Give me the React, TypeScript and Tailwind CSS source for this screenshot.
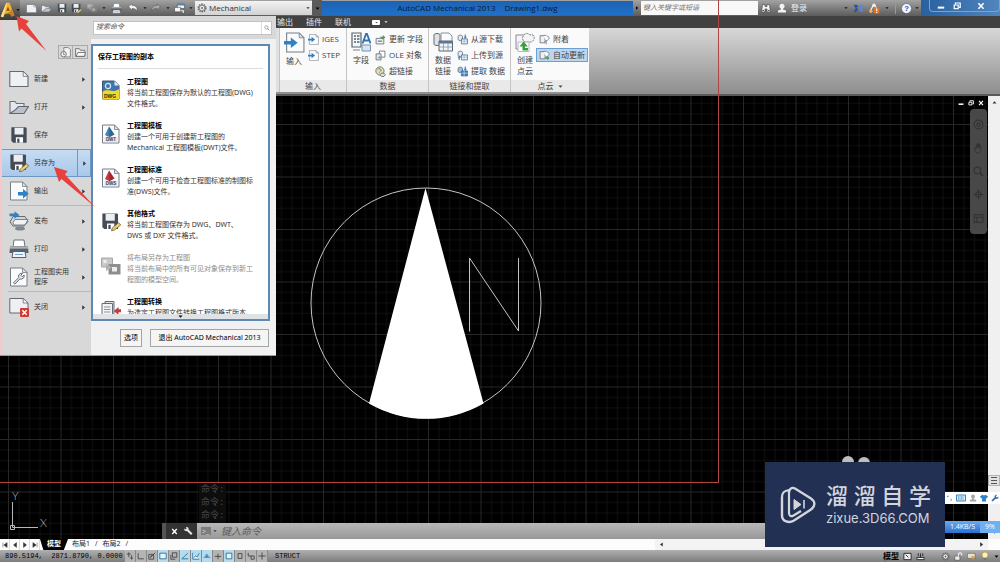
import React from "react";
import type { ReactNode } from "react";

type IconProps = { className?: string };

function Svg({ className = "size-5", children }: { className?: string; children: ReactNode }) {
  return (
    <svg viewBox="0 0 20 20" className={`shrink-0 ${className}`} fill="none" aria-hidden="true">
      {children}
    </svg>
  );
}

/* ---------- document icons ---------- */

const PageIcon = ({ className }: IconProps) => (
  <Svg className={className}>
    <path d="M.8 2.5h13.4l4.8 4.8v10.2H.8z" fill="#eef0f3" stroke="#646a72" strokeWidth="1.1" />
    <path d="M14.2 2.5v4.8H19z" fill="#fff" stroke="#646a72" strokeWidth=".8" />
  </Svg>
);

const FolderIcon = ({ className }: IconProps) => (
  <Svg className={className}>
    <path d="M1 16.5v-12h5l1.5 2H15v3" fill="#e4e8ec" stroke="#6b7178" strokeWidth="1.1" />
    <path d="M1 16.5l5.500-3.800 3-3.200h10l-4.500 7z" fill="#b9c2cc" stroke="#5f666e" strokeWidth="1.1" />
  </Svg>
);

const FloppyShape = () => (
  <>
    <path d="M1.500 1.500h16l1 1v16h-15l-2-2z" fill="#454c56" />
    <path d="M5 2h10v7.500H5z" fill="#eceff2" />
    <path d="M6.500 12.500h8v6h-8z" fill="#fff" />
    <path d="M8 14h2.500v4.500H8z" fill="#454c56" />
  </>
);

const FloppyIcon = ({ className }: IconProps) => (
  <Svg className={className}>
    <FloppyShape />
  </Svg>
);

const FloppyPencilIcon = ({ className }: IconProps) => (
  <Svg className={className}>
    <g transform="scale(.92)">
      <FloppyShape />
    </g>
    <path d="M10.500 18.800l.8-2.900 6.200-5.200 2.200 2.300-6.300 5z" fill="#ecd07a" stroke="#6f5a26" strokeWidth=".8" />
  </Svg>
);

const Sheet = ({ fill = "#fafbfc" }: { fill?: string }) => (
  <>
    <path d="M1.500 1h12l4.500 4.500V19H1.500z" fill={fill} stroke="#767d85" strokeWidth="1" />
    <path d="M13.500 1v4.500H18z" fill="#dfe3e8" stroke="#767d85" strokeWidth=".8" />
  </>
);

const ExportIcon = ({ className }: IconProps) => (
  <Svg className={className}>
    <Sheet />
    <path d="M9 11h5V8l5.800 4.700-5.800 4.800v-3H9z" fill="#2f82c6" />
  </Svg>
);

const ImportIcon = ({ className }: IconProps) => (
  <Svg className={className}>
    <g transform="translate(1 0)">
      <Sheet />
    </g>
    <path d="M0 8.500h6.500V5.200l6.500 5-6.500 5V12H0z" fill="#2f82c6" />
  </Svg>
);

const PublishIcon = ({ className }: IconProps) => (
  <Svg className={className}>
    <path d="M4 5.500h12l3 5-4 4.500H4l-3-4z" fill="#cfd5db" stroke="#646b73" />
    <path d="M4 11.500l2-3h13l-3 5.500H5z" fill="#f0f3f5" stroke="#646b73" strokeWidth=".8" />
    <ellipse cx="11" cy="17.500" rx="5" ry="2" fill="#7f8790" />
    <path d="M.5 2.500h5V.3l5 3.700-5 3.700v-2.400h-5z" fill="#2f82c6" />
  </Svg>
);

const PrinterIcon = ({ className }: IconProps) => (
  <Svg className={className}>
    <path d="M5 1h10l1 7H4z" fill="#fff" stroke="#6b7178" />
    <path d="M1 7.500h18l.5 6.500H.5z" fill="#59616b" />
    <path d="M1 7.500h18v2.200H1z" fill="#aab1b9" />
    <path d="M4 12.500h12l1 6H3z" fill="#f1f5f9" stroke="#59616b" />
    <path d="M6 15.500h8" stroke="#6ea0cf" />
  </Svg>
);

const WrenchPageIcon = ({ className }: IconProps) => (
  <Svg className={className}>
    <Sheet />
    <path
      d="M4.500 15.800l5.200-5.200a3.200 3.200 0 0 1 3.800-4.200l-1.700 1.900 1.400 1.400 1.900-1.700a3.200 3.200 0 0 1-4.200 3.900l-5 5.200z"
      fill="#e7eaee"
      stroke="#555c65"
      strokeWidth=".9"
    />
  </Svg>
);

const ClosePageIcon = ({ className }: IconProps) => (
  <Svg className={className}>
    <path d="M.8 1.500h13.400L19 6v10H.8z" fill="#eef0f3" stroke="#646a72" />
    <path d="M14.200 1.500V6H19z" fill="#fff" stroke="#646a72" strokeWidth=".8" />
    <rect x="11" y="11" width="9" height="9" rx="1" fill="#cf3b30" />
    <path d="M13.300 13.300l4.400 4.400m0-4.400l-4.400 4.400" stroke="#fff" strokeWidth="1.500" />
  </Svg>
);

const TagSheet = ({ label, tip, className }: IconProps & { label: string; tip: string }) => (
  <Svg className={className}>
    <Sheet />
    <path d="M8 2.500l-4 8.500 4.500 2.200 5-2.600z" fill={tip} />
    <path d="M8 2.500l.5 10.700 5-2.600z" fill="#000" fillOpacity=".22" />
    <rect x="3.500" y="13.200" width="13" height="5" fill="#e3e6ea" />
    <text x="10" y="17.400" textAnchor="middle" fontSize="4.500" fontWeight="700" fill="#3b3f45" fontFamily="Liberation Sans, sans-serif">
      {label}
    </text>
  </Svg>
);

const DwgIcon = ({ className }: IconProps) => (
  <Svg className={className}>
    <path d="M1.500 1h12l4.500 4.500V19H1.500z" fill="#3e76ab" stroke="#3a5673" />
    <path d="M13.500 1v4.500H18z" fill="#dfe9f3" />
    <circle cx="7" cy="6" r="2.600" fill="none" stroke="#d4e6f5" strokeWidth="1.200" />
    <path d="M1.500 12c5-4.500 10 2 16.500-3v10H1.500z" fill="#f2d72d" />
    <text x="9" y="17.800" textAnchor="middle" fontSize="5" fontWeight="700" fill="#332c00" fontFamily="Liberation Sans, sans-serif">
      DWG
    </text>
  </Svg>
);

const LayoutSaveIcon = ({ className }: IconProps) => (
  <Svg className={className}>
    <path d="M.5 2h11v9H.5z" fill="#c9c9c9" stroke="#a6a6a6" />
    <path d="M2.500 4h3v3h-3z" fill="#efefef" />
    <path d="M7.500 8h12v10.500h-12z" fill="#8e8e8e" />
    <path d="M11 11h5v4.500h-5z" fill="#ededed" />
    <path d="M5 8v7l6-3.500z" fill="#b3b3b3" />
  </Svg>
);

const ConvertIcon = ({ className }: IconProps) => (
  <Svg className={className}>
    <path d="M4 1.500h9v15H4z" fill="#dde0e4" stroke="#666d75" />
    <path d="M1 3.500h10.500v14H1z" fill="#f3f4f6" stroke="#666d75" />
    <path d="M3 7h6.500M3 9.500h6.500M3 12h6.500" stroke="#8d949c" />
    <path d="M20 9.300h-2.500V7L12.800 11l4.700 4v-2.700H20z" fill="#c83a3d" />
  </Svg>
);

/* ---------- ribbon icons ---------- */

const FieldIcon = ({ className }: IconProps) => (
  <Svg className={className}>
    <path d="M1 1h9v14H1z" fill="#f5f8fb" stroke="#59636e" strokeWidth="1.200" />
    <path d="M3 4h2m1 0h2.500M3 7h2m1 0h2.500M3 10h2m1 0h2.500" stroke="#59636e" strokeWidth="1.400" />
    <path d="M11 13h8.500v6H11z" fill="#d4e4f4" stroke="#7893ad" />
    <path d="M11.500 11.500L15 2h1l3.500 9.500M13 8.500h5" stroke="#2f73b4" strokeWidth="1.800" />
    <path d="M2 18h7" stroke="#b6bec7" strokeWidth="2" />
  </Svg>
);

const UpdateFieldIcon = ({ className }: IconProps) => (
  <Svg className={className}>
    <path d="M2 8h14v10H2z" fill="#f0f2f4" stroke="#656c74" strokeWidth="1.500" />
    <path d="M5 13h8" stroke="#656c74" strokeWidth="2" />
    <path d="M8 5h6V2l5 4-5 4" fill="#49a04c" />
  </Svg>
);

const OleIcon = ({ className }: IconProps) => (
  <Svg className={className}>
    <path d="M8 2h10v11H8z" fill="#fff" stroke="#656c74" strokeWidth="1.500" />
    <path d="M2 7h9v11H2z" fill="#e3e8ee" stroke="#656c74" strokeWidth="1.500" />
    <path d="M5 15l3-4 3 4z" fill="#6c94ba" />
  </Svg>
);

const HyperlinkIcon = ({ className }: IconProps) => (
  <Svg className={className}>
    <circle cx="9" cy="9" r="7.500" fill="#e6e1b8" stroke="#5e666f" strokeWidth="1.500" />
    <path d="M5 6c2-2 5-1 6 1s-3 3-3 5" stroke="#6f7b52" strokeWidth="1.800" />
    <path d="M9 16l3-3h4l3 3-3 3h-4z" fill="#dfe3e8" stroke="#4e5660" strokeWidth="1.400" />
  </Svg>
);

const DataLinkIcon = ({ className }: IconProps) => (
  <Svg className={className}>
    <path d="M1 3c0-2 6-2 6 0v9c0 2-6 2-6 0z" fill="#dfe3e7" stroke="#626a73" />
    <path d="M8 1h8l3 3v6H8z" fill="#fafbfc" stroke="#8a929a" />
    <path d="M6 9h13.500v10H6z" fill="#eef4fa" stroke="#5a6470" />
    <path d="M6 9h13.500v2.500H6z" fill="#56779a" />
    <path d="M6 15h13.500M10.500 11v8M15 11v8" stroke="#8a97a5" strokeWidth=".8" />
  </Svg>
);

const TransferIcon = ({ className, up, solid }: IconProps & { up?: boolean; solid?: boolean }) => (
  <Svg className={className}>
    <path d="M2 4c0-2.500 8-2.500 8 0v6c0 2.500-8 2.500-8 0z" fill={solid ? "#9fc2e4" : "#e6ebf0"} stroke="#5b6a7a" strokeWidth="1.400" />
    <path d="M8 9h11v9H8z" fill={solid ? "#3d7ebc" : "#eef4fa"} stroke="#3f6a96" strokeWidth="1.400" />
    <path d="M8 13h11M13 9v9" stroke={solid ? "#fff" : "#7d9cbb"} />
    {up ? <path d="M3 18v-4H1l3-4 3 4H5v4z" fill="#2f82c6" /> : <path d="M14 1v4h-2l3 4 3-4h-2V1z" fill="#2f82c6" />}
  </Svg>
);

const CloudCreateIcon = ({ className }: IconProps) => (
  <Svg className={className}>
    <path d="M1 3h10v14H1z" fill="#f4f5f6" stroke="#858c94" />
    <path d="M9 3c2-3 5-1 6 0 3-1 5 1 4 4s-3 3-4 3H10c-3-1-3-5-1-7z" fill="#f4f4f4" stroke="#6e757d" strokeDasharray="2 1" />
    <path d="M3 10h11v9.500H3z" fill="#fff" stroke="#b4bac0" />
    <path d="M13 18.500H7.500v-4H4.500L8.700 9.500l4.200 5H10v1.500h3z" fill="#3b9c40" />
  </Svg>
);

const CloudIcon = ({ className, green }: IconProps & { green?: boolean }) => (
  <Svg className={className}>
    <path d="M2 3h9v13H2z" fill="#edf2f7" stroke="#69727c" strokeWidth="1.500" />
    <path d="M8 4c2-3 5-2 6 0 4-1 5 3 4 5s-3 3-5 3" fill="#f7f8f9" stroke="#69727c" strokeWidth="1.600" strokeDasharray="3 1" />
    {green ? <path d="M11 13h4v-3l4 4.500-4 4.500v-3h-4z" fill="#46a04a" /> : <path d="M13 12v7M13 12l-3 3" stroke="#6d7680" strokeWidth="1.500" />}
  </Svg>
);

/* ---------- small glyphs ---------- */

const GearIcon = ({ className }: IconProps) => (
  <Svg className={className}>
    <circle cx="10" cy="10" r="7.500" stroke="#666" strokeWidth="3" strokeDasharray="3 1.700" />
    <circle cx="10" cy="10" r="5.500" fill="#eee" stroke="#666" strokeWidth="1.500" />
    <circle cx="10" cy="10" r="2" fill="#666" />
  </Svg>
);

const UndoIcon = ({ className, flip }: IconProps & { flip?: boolean }) => (
  <Svg className={className}>
    <g transform={flip ? "matrix(-1 0 0 1 20 0)" : undefined}>
      <path d="M1 7l7-5v3c7 0 11 3 10 11-2-4-5-5-10-5v3z" fill={flip ? "#a9a9a9" : "#f4f4f4"} stroke="#444" strokeWidth=".8" />
    </g>
  </Svg>
);

const WindowsIcon = ({ className }: IconProps) => (
  <Svg className={className}>
    <path d="M6 2h13v8H6z" fill="#f6f6f6" stroke="#404040" />
    <path d="M6 2h13v2.500H6z" fill="#4b82b8" />
    <path d="M1 8h11v8H1z" fill="#f6f6f6" stroke="#404040" />
    <path d="M12 14h5v4" stroke="#eee" strokeWidth="2" />
  </Svg>
);

const MagnifierIcon = ({ className }: IconProps) => (
  <Svg className={className}>
    <circle cx="8" cy="8" r="5.500" stroke="#777" strokeWidth="2" />
    <path d="M12 12l6 6" stroke="#777" strokeWidth="2.600" />
  </Svg>
);

const BinocularsIcon = ({ className }: IconProps) => (
  <Svg className={className}>
    <path d="M3 3h5v4h4V3h5l2 15h-7v-6H8v6H1z" fill="#f2f2f2" stroke="#444" strokeWidth="1.300" />
    <path d="M3 15h3m8 0h3" stroke="#444" strokeWidth="2" />
  </Svg>
);

const PersonIcon = ({ className, color = "#f2f2f2" }: IconProps & { color?: string }) => (
  <Svg className={className}>
    <circle cx="10" cy="6.500" r="5" fill={color} />
    <path d="M8 10h4v3l6 2v4H2v-4l6-2z" fill={color} />
  </Svg>
);

const ExchangeIcon = ({ className }: IconProps) => (
  <Svg className={className}>
    <path d="M1 3h6l3 4-4 1 3 3-3 5H1l4-6z" fill="#2c4fa0" />
    <path d="M19 3h-6l-3 4 4 1-3 3 3 5h5l-4-6z" fill="#5f87d6" />
  </Svg>
);

const AlertShareIcon = ({ className }: IconProps) => (
  <Svg className={className}>
    <path d="M9 2L2 15M9 2l5 8" stroke="#eee" strokeWidth="2.500" />
    <circle cx="9" cy="4" r="3" fill="#f0f0f0" />
    <circle cx="3.500" cy="15" r="3" fill="#f0b060" />
    <rect x="9" y="8" width="10" height="11" fill="#df7526" />
    <path d="M14 10v4.500m0 1.500v2" stroke="#fff" strokeWidth="2" />
  </Svg>
);

const HelpIcon = ({ className }: IconProps) => (
  <Svg className={className}>
    <circle cx="10" cy="10" r="9" fill="#f5f7fb" stroke="#3c4d79" strokeWidth="1" />
    <text x="10" y="15" textAnchor="middle" fontSize="14" fontWeight="700" fill="#2b4fa5" fontFamily="Liberation Sans, sans-serif">
      ?
    </text>
  </Svg>
);

const WindowGlyph = ({ kind, className }: IconProps & { kind: "min" | "restore" | "close" }) => (
  <Svg className={className}>
    {kind === "min" && <path d="M2 14h16" stroke="#fff" strokeWidth="5" />}
    {kind === "restore" && (
      <>
        <path d="M6 6V2.500h12v11h-3" stroke="#fff" strokeWidth="3" />
        <path d="M3 7.500h10v9H3z" stroke="#fff" strokeWidth="3" />
      </>
    )}
    {kind === "close" && <path d="M3.500 3l13 14m0-14l-13 14" stroke="#fff" strokeWidth="4" />}
  </Svg>
);

const Caret = ({ className }: IconProps) => (
  <Svg className={className}>
    <path d="M2 6h16l-8 9z" fill="currentColor" />
  </Svg>
);

const CaretRight = ({ className }: IconProps) => (
  <Svg className={className}>
    <path d="M5 1v18l11-9z" fill="currentColor" />
  </Svg>
);

const IconButton = ({ label, className = "", children }: { label: string; className?: string; children: ReactNode }) => (
  <button type="button" aria-label={label} className={`flex shrink-0 items-center justify-center ${className}`}>
    {children}
  </button>
);

const Dot = () => (
  <span className="flex w-[9px] shrink-0 items-center justify-center text-neutral-900">
    <Caret className="size-1" />
  </span>
);

/* ---------- title bar ---------- */

function TitleBar() {
  return (
    <header className="relative z-20 flex h-4 items-stretch bg-linear-to-b from-[#a3a3a3] to-[#5c5c5c]">
      <button
        type="button"
        aria-label="应用程序菜单"
        className="mr-1 flex h-5 w-5 shrink-0 items-center bg-linear-to-b from-[#8a8484] to-[#3b3838] text-black"
      >
        <Svg className="size-4">
          <path d="M8 1h4l6 16-4 1-1-3H6l-2 4-3-1z" fill="#f0b32b" />
          <path d="M8 1l1 1-5 17-3-1z" fill="#fbe08a" />
          <path d="M10 6l2 5H8z" fill="#7a4a0a" />
          <path d="M6 15l7 0 1 3 4-1-4-9-1 4z" fill="#c9801a" />
        </Svg>
        <Caret className="size-1" />
      </button>
      <IconButton label="新建" className="w-[15px]"><PageIcon className="size-[11px]" /></IconButton>
      <IconButton label="打开" className="w-[15px]"><FolderIcon className="size-[11px]" /></IconButton>
      <IconButton label="保存" className="w-[15px]"><FloppyIcon className="size-[10px]" /></IconButton>
      <IconButton label="另存为" className="w-[15px]"><FloppyPencilIcon className="size-[11px]" /></IconButton>
      <IconButton label="发布" className="w-[15px] opacity-50"><LayoutSaveIcon className="size-[10px]" /></IconButton>
      <Dot />
      <IconButton label="打印" className="w-[17px]"><PrinterIcon className="size-[11px]" /></IconButton>
      <IconButton label="放弃" className="w-[15px]"><UndoIcon className="size-[10px]" /></IconButton>
      <Dot />
      <IconButton label="重做" className="w-[14px]"><UndoIcon flip className="size-[10px]" /></IconButton>
      <Dot />
      <IconButton label="窗口" className="w-[14px]"><WindowsIcon className="size-[11px]" /></IconButton>
      <Dot />
      <label className="my-px flex w-[117px] shrink-0 items-center bg-linear-to-b from-[#f3f3f3] to-[#d2d2d2] pl-[2px] text-[8px] text-[#333]">
        <GearIcon className="mr-[2px] size-[10px]" />
        <select aria-label="工作空间" className="h-3 flex-1 appearance-none bg-transparent text-[8px] leading-3 outline-none">
          <option>Mechanical</option>
        </select>
        <Caret className="mr-[2px] size-1" />
      </label>
      <IconButton label="自定义快速访问工具栏" className="w-[10px] bg-[#5a5a5a] text-black"><Caret className="size-[5px]" /></IconButton>
      <div className="my-px flex min-w-0 flex-1 items-center justify-center gap-[9px] bg-linear-to-b from-[#1b62b4] to-[#2070c8] text-[8px] whitespace-nowrap text-[#0a1a33]">
        <span>AutoCAD Mechanical 2013</span>
        <span>Drawing1.dwg</span>
      </div>
      <IconButton label="展开搜索" className="w-2 text-black"><CaretRight className="size-1" /></IconButton>
      <input
        type="text"
        aria-label="搜索帮助"
        placeholder="键入关键字或短语"
        className="my-px w-[117px] shrink-0 bg-[#f8f8f8] px-[2px] text-[7px] outline-none placeholder:text-[#777] placeholder:italic"
      />
      <div className="flex w-[163px] shrink-0 items-center pl-1 text-[8px] text-[#f0f0f0]">
        <IconButton label="搜索" className="w-2"><BinocularsIcon className="size-[10px]" /></IconButton>
        <button type="button" className="ml-[7px] flex items-center gap-1">
          <PersonIcon className="size-[10px]" />
          登录
        </button>
        <span className="ml-auto"><Dot /></span>
        <IconButton label="Exchange" className="w-4"><ExchangeIcon className="size-[11px]" /></IconButton>
        <IconButton label="通知" className="w-4"><AlertShareIcon className="size-[11px]" /></IconButton>
        <Dot />
        <span className="ml-1 h-3 w-px bg-[#999]" />
        <IconButton label="帮助" className="ml-1 w-3"><HelpIcon className="size-[11px]" /></IconButton>
        <Dot />
      </div>
      <div className="flex w-[79px] shrink-0 items-start bg-linear-to-r from-[#2860a0] to-[#4f86bd] pl-2">
        <div className="flex h-3 flex-1 items-center gap-2 rounded-b-sm border border-t-0 border-[#7aa3cf] pl-[7px]">
          <IconButton label="最小化"><WindowGlyph kind="min" className="size-2" /></IconButton>
          <IconButton label="还原"><WindowGlyph kind="restore" className="size-2" /></IconButton>
          <IconButton label="关闭" className="pl-2"><WindowGlyph kind="close" className="size-2" /></IconButton>
        </div>
      </div>
    </header>
  );
}

/* ---------- ribbon ---------- */

function RibbonPanel({ title, menu, className, children }: { title: string; menu?: boolean; className: string; children: ReactNode }) {
  return (
    <section className={`flex shrink-0 flex-col border-l border-[#c4c4c4] bg-[#fafafa] ${className}`}>
      <div className="flex flex-1 items-start gap-px pt-1 pl-1">{children}</div>
      <h2 className="flex h-3 items-center justify-center gap-1 bg-[#e9e9e9] text-[8px]">
        {title}
        {menu && <Caret className="size-[5px]" />}
      </h2>
    </section>
  );
}

const BigTool = ({ icon, lines }: { icon: ReactNode; lines: string[] }) => (
  <button type="button" className="flex w-5 shrink-0 flex-col items-center text-[8px] leading-[11px] whitespace-nowrap">
    <span className="mb-[2px]">{icon}</span>
    {lines.map((line) => (
      <span key={line}>{line}</span>
    ))}
  </button>
);

const SmallTool = ({ icon, label, active }: { icon: ReactNode; label: string; active?: boolean }) => (
  <button
    type="button"
    className={
      active
        ? "flex h-[14px] items-center gap-[3px] border border-[#6f9fd0] bg-[#bcd6ef] px-[2px] whitespace-nowrap"
        : "flex h-[14px] items-center gap-[3px] border border-transparent px-[2px] whitespace-nowrap"
    }
  >
    {icon}
    {label}
  </button>
);

const ToolColumn = ({ children }: { children: ReactNode }) => (
  <div className="flex flex-col gap-[2px] text-[8px] leading-3">{children}</div>
);

function Ribbon() {
  return (
    <>
      <nav className="flex h-3 items-center gap-[13px] bg-[#414141] pl-[277px] text-[8px] leading-3 text-[#e6e6e6]">
        <button type="button">输出</button>
        <button type="button">插件</button>
        <button type="button">联机</button>
        <button type="button" aria-label="最小化功能区" className="ml-2 flex items-center gap-1">
          <span className="flex h-[5px] w-2 items-center justify-center rounded-[1px] bg-white text-[#414141]">
            <Caret className="size-[3px]" />
          </span>
          <Caret className="size-1" />
        </button>
      </nav>
      <div className="flex h-[68px] border-b-2 border-[#5b5b5b] bg-linear-to-b from-[#d8d8d8] to-[#8e8e8e] pl-[276px] text-[#444]">
        <div className="mb-[2px] flex">
          <span className="w-[3px] bg-[#e0e0e0]" />
          <RibbonPanel title="输入" className="w-[67px]">
            <BigTool icon={<ImportIcon className="size-[21px]" />} lines={["输入"]} />
            <ToolColumn>
              <SmallTool icon={<ImportIcon className="size-[11px]" />} label="IGES" />
              <SmallTool icon={<ImportIcon className="size-[11px]" />} label="STEP" />
            </ToolColumn>
          </RibbonPanel>
          <RibbonPanel title="数据" className="w-[82px]">
            <BigTool icon={<FieldIcon className="size-5" />} lines={["字段"]} />
            <ToolColumn>
              <SmallTool icon={<UpdateFieldIcon className="size-[11px]" />} label="更新 字段" />
              <SmallTool icon={<OleIcon className="size-[11px]" />} label="OLE 对象" />
              <SmallTool icon={<HyperlinkIcon className="size-[11px]" />} label="超链接" />
            </ToolColumn>
          </RibbonPanel>
          <RibbonPanel title="链接和提取" className="w-[82px]">
            <BigTool icon={<DataLinkIcon className="size-5" />} lines={["数据", "链接"]} />
            <ToolColumn>
              <SmallTool icon={<TransferIcon className="size-[11px]" />} label="从源下载" />
              <SmallTool icon={<TransferIcon up className="size-[11px]" />} label="上传到源" />
              <SmallTool icon={<TransferIcon solid className="size-[11px]" />} label="提取 数据" />
            </ToolColumn>
          </RibbonPanel>
          <RibbonPanel title="点云" menu className="w-[79px]">
            <BigTool icon={<CloudCreateIcon className="size-5" />} lines={["创建", "点云"]} />
            <ToolColumn>
              <SmallTool icon={<CloudIcon className="size-[11px]" />} label="附着" />
              <SmallTool active icon={<CloudIcon green className="size-[11px]" />} label="自动更新" />
            </ToolColumn>
          </RibbonPanel>
        </div>
      </div>
    </>
  );
}

/* ---------- application menu ---------- */

type SideItem = { label: string; icon: ReactNode; arrow?: boolean; active?: boolean; ruled?: boolean };

const sideItems: SideItem[] = [
  { label: "新建", icon: <PageIcon />, arrow: true },
  { label: "打开", icon: <FolderIcon />, arrow: true },
  { label: "保存", icon: <FloppyIcon className="size-[18px] mx-px" /> },
  { label: "另存为", icon: <FloppyPencilIcon />, arrow: true, active: true },
  { label: "输出", icon: <ExportIcon />, arrow: true },
  { label: "发布", icon: <PublishIcon />, arrow: true, ruled: true },
  { label: "打印", icon: <PrinterIcon />, arrow: true },
  { label: "工程图实用程序", icon: <WrenchPageIcon />, arrow: true },
  { label: "关闭", icon: <ClosePageIcon />, arrow: true, ruled: true },
];

type SaveFormat = { title: string; text: string; icon: ReactNode; disabled?: boolean };

const saveFormats: SaveFormat[] = [
  { title: "工程图", text: "将当前工程图保存为默认的工程图(DWG)\n文件格式。", icon: <DwgIcon /> },
  { title: "工程图模板", text: "创建一个可用于创建新工程图的\nMechanical 工程图模板(DWT)文件。", icon: <TagSheet label="DWT" tip="#3f82b4" /> },
  { title: "工程图标准", text: "创建一个可用于检查工程图标准的制图标\n准(DWS)文件。", icon: <TagSheet label="DWS" tip="#c7383f" /> },
  { title: "其他格式", text: "将当前工程图保存为 DWG、DWT、\nDWS 或 DXF 文件格式。", icon: <FloppyPencilIcon /> },
  { title: "将布局另存为工程图", text: "将当前布局中的所有可见对象保存到新工\n程图的模型空间。", icon: <LayoutSaveIcon />, disabled: true },
  { title: "工程图转换", text: "为选定工程图文件转换工程图格式版本", icon: <ConvertIcon /> },
];

function AppMenu() {
  return (
    <div className="absolute top-4 left-0 z-10 w-[276px] border-b border-[#9a9a9a] bg-[#d8d8d8] font-['Noto_Sans','Noto_Sans_CJK_SC',sans-serif] text-[7px] text-[#333]">
      <div className="flex h-[23px] items-center pr-1 pl-[93px]">
        <label className="flex h-[14px] flex-1 items-center border border-[#c2c2c2] bg-white">
          <input
            type="text"
            aria-label="搜索命令"
            placeholder="搜索命令"
            className="min-w-0 flex-1 px-[2px] text-[7px] outline-none placeholder:text-[#555] placeholder:italic"
          />
          <span className="flex h-full w-[10px] items-center justify-center border-l border-[#ddd]">
            <MagnifierIcon className="size-[6px]" />
          </span>
        </label>
      </div>
      <div className="flex">
        <div className="w-[91px] shrink-0">
          <div className="flex h-[26px] items-center justify-end pt-1 pr-[3px] pb-1">
            <IconButton label="最近使用的文档" className="h-[14px] w-[15px] border border-[#aaa]">
              <Svg className="size-[11px]">
                <path d="M7 1h8l4 4v13H7z" fill="#f2f2f2" stroke="#777" strokeWidth="1.500" />
                <circle cx="6.500" cy="13" r="5" fill="#eee" stroke="#666" strokeWidth="1.500" />
                <path d="M6.500 10v3.500H9" stroke="#666" strokeWidth="1.300" />
              </Svg>
            </IconButton>
            <IconButton label="打开的文档" className="h-[14px] w-[15px] border border-l-0 border-[#aaa]">
              <Svg className="size-[11px]">
                <path d="M1 3h7l2 3h8v11H1z" fill="#eee" stroke="#666" strokeWidth="1.500" />
                <path d="M2 17l3-7h14l-2 7z" fill="#f8f8f8" stroke="#666" strokeWidth="1.500" />
              </Svg>
            </IconButton>
          </div>
          <ul>
            {sideItems.map((item) => (
              <li key={item.label}>
                {item.ruled && <div className="ml-2 h-[2px] border-t border-[#b9b9b9]" />}
                <button
                  type="button"
                  className={
                    item.active
                      ? "flex h-7 w-full items-center border border-[#6c98c8] bg-linear-to-b from-[#c6dcf3] to-[#a9c8ea] pl-2 text-left"
                      : "flex h-7 w-full items-center border border-transparent pl-2 text-left"
                  }
                >
                  {item.icon}
                  <span className="ml-[5px] w-9 leading-[10px]">{item.label}</span>
                  <span
                    className={
                      item.active
                        ? "ml-auto flex h-full w-[13px] items-center justify-center border-l border-[#6c98c8]"
                        : "ml-auto flex h-full w-[13px] items-center justify-center"
                    }
                  >
                    {item.arrow && <CaretRight className="size-[5px]" />}
                  </span>
                </button>
              </li>
            ))}
          </ul>
        </div>
        <div className="flex flex-1 flex-col bg-[#f1f1f1] pr-[6px]">
          <section className="mt-[5px] flex h-[277px] flex-col border-2 border-[#5f89b3] bg-white">
            <h2 className="mx-[5px] flex h-[23px] shrink-0 items-center border-b border-[#dcdcdc] font-bold text-black">保存工程图的副本</h2>
            <ul className="min-h-0 flex-1 overflow-hidden pt-[7px]">
              {saveFormats.map((format) => (
                <li key={format.title} className="h-11">
                  <button
                    type="button"
                    disabled={format.disabled}
                    className={
                      format.disabled
                        ? "flex items-start gap-[6px] pl-2 text-left leading-[11px] text-[#8c8c8c]"
                        : "flex items-start gap-[6px] pl-2 text-left leading-[11px] text-[#333]"
                    }
                  >
                    <span className="pt-1">{format.icon}</span>
                    <span className="whitespace-pre">
                      <span className={format.disabled ? "block" : "block font-bold text-black"}>{format.title}</span>
                      <span className="block">{format.text}</span>
                    </span>
                  </button>
                </li>
              ))}
            </ul>
            <IconButton label="向下滚动" className="h-[5px] bg-[#dfe3e8] text-black">
              <Caret className="size-[5px]" />
            </IconButton>
          </section>
          <footer className="flex h-[34px] items-center justify-end gap-2 pr-px">
            <button type="button" className="h-[18px] border border-[#a5a5a5] bg-[#f5f5f5] px-[3px] text-[7px] text-black">选项</button>
            <button type="button" className="h-[18px] w-[119px] border border-[#a5a5a5] bg-[#f5f5f5] text-[7px] whitespace-nowrap text-black">
              退出 AutoCAD Mechanical 2013
            </button>
          </footer>
        </div>
      </div>
    </div>
  );
}

/* ---------- drawing area ---------- */

function Drawing() {
  return (
    <svg className="absolute inset-0 size-full" aria-label="指北针图形">
      <defs>
        <pattern id="grid" x="8" y="28" width="52.500" height="52.500" patternUnits="userSpaceOnUse">
          <path
            d="M11 0v52.500M21.500 0v52.500M32 0v52.500M42.500 0v52.500M0 11h52.500M0 21.500h52.500M0 32h52.500M0 42.500h52.500"
            stroke="#101010"
            strokeWidth="1"
          />
          <path d="M.5 0v52.500M0 .5h52.500" stroke="#272727" strokeWidth="1" />
        </pattern>
      </defs>
      <rect width="100%" height="100%" fill="#000" />
      <rect width="100%" height="100%" fill="url(#grid)" />
      <circle cx="426" cy="207" r="115" fill="none" stroke="#c4c4c4" strokeWidth="1" />
      <path d="M425.500 92L369 307.500A115 115 0 0 0 483.500 307.500z" fill="#fff" />
      <path d="M469.500 235.500V162L518.500 235V162" fill="none" stroke="#c4c4c4" strokeWidth="1" />
      <g stroke="#b8b8b8" fill="none">
        <path d="M12.500 406v25.500H38" />
        <path d="M10.500 429.500h4v4h-4z" />
      </g>
      <g fill="#b8b8b8" fontSize="11" fontFamily="Lato, sans-serif" fontWeight="300">
        <text x="12" y="404">Y</text>
        <text x="40" y="431">X</text>
      </g>
      <circle cx="848" cy="366" r="6" fill="#bdbdbd" />
      <circle cx="864" cy="367" r="6" fill="#bdbdbd" />
    </svg>
  );
}

function Canvas() {
  return (
    <main className="flex min-h-0 flex-1">
      <div className="relative flex-1 overflow-hidden bg-black">
        <Drawing />
        <div className="absolute top-1 right-1 flex gap-1">
          <IconButton label="最小化图形"><WindowGlyph kind="min" className="size-[6px]" /></IconButton>
          <IconButton label="还原图形"><WindowGlyph kind="restore" className="size-[6px]" /></IconButton>
          <IconButton label="关闭图形"><WindowGlyph kind="close" className="size-[6px]" /></IconButton>
        </div>
        <div className="absolute top-[13px] right-px flex h-[125px] w-[17px] flex-col items-center justify-around rounded-sm bg-[#484848] py-1">
          <Svg className="size-[11px]"><circle cx="10" cy="10" r="8" stroke="#333" strokeWidth="2" /><circle cx="10" cy="10" r="3" stroke="#333" strokeWidth="2" /></Svg>
          <Svg className="size-[11px]"><path d="M6 18L2 9l4 1V3h2v6V1h2v8V2h2v7V4h2v9l-2 5z" stroke="#333" strokeWidth="1.500" /></Svg>
          <Svg className="size-[11px]"><circle cx="8" cy="8" r="6" stroke="#333" strokeWidth="2" /><path d="M12 12l6 6" stroke="#333" strokeWidth="3" /></Svg>
          <Svg className="size-[11px]"><path d="M10 1v18M1 10h18" stroke="#333" strokeWidth="2" /><circle cx="10" cy="10" r="5" stroke="#333" strokeWidth="2" /></Svg>
          <Svg className="size-[11px]"><path d="M2 3h16v14H2zM2 8h16M7 8v9" stroke="#333" strokeWidth="2" /></Svg>
        </div>
        <div className="absolute bottom-4 left-[199px] bg-[#0d0d0d] px-[2px] font-['Liberation_Mono','Noto_Sans_CJK_SC',monospace] text-[9px] leading-[13px] text-[#484848]">
          <p>命令:</p>
          <p>命令:</p>
          <p>命令:</p>
        </div>
        <form className="absolute right-[43px] bottom-0 left-[162px] flex h-4 items-center bg-linear-to-b from-[#b9b9b9] to-[#989898]">
          <div className="flex h-full w-[35px] shrink-0 items-center justify-around border-l-4 border-[#555] bg-[#333] px-[2px]">
            <IconButton label="关闭命令行"><WindowGlyph kind="close" className="size-[7px]" /></IconButton>
            <IconButton label="自定义">
              <Svg className="size-[10px]"><path d="M2 5l3 2 2-2-1-3c4-1 6 2 5 5l8 8-3 3-8-8c-3 1-6-1-6-5z" fill="#e8e8e8" /></Svg>
            </IconButton>
          </div>
          <span className="mr-[2px] ml-1 flex h-2 w-[10px] items-center bg-[#7d7d7d] pl-px text-[7px] leading-none text-[#ddd]">&gt;_</span>
          <span className="text-[#333]"><Caret className="size-1" /></span>
          <input
            type="text"
            aria-label="命令行"
            placeholder="键入命令"
            className="ml-1 min-w-0 flex-1 bg-transparent text-[10px] outline-none placeholder:text-[#5c5c5c] placeholder:italic"
          />
        </form>
      </div>
      <div className="flex w-3 shrink-0 flex-col items-center justify-between bg-[#f0f0f0] py-1 text-[#333]">
        <Svg className="size-[5px]"><path d="M2 14h16l-8-9z" fill="currentColor" /></Svg>
        <div className="mt-auto mb-11 flex h-[11px] w-full flex-col justify-center gap-[2px] border border-[#b4b4b4] bg-[#e2e2e2] px-[2px]">
          <span className="h-px bg-[#555]" />
          <span className="h-px bg-[#555]" />
          <span className="h-px bg-[#555]" />
        </div>
        <Caret className="size-[5px]" />
      </div>
    </main>
  );
}

/* ---------- layout tabs and status bar ---------- */

const navGlyphs: { label: string; d: string }[] = [
  { label: "第一个布局", d: "M3 2v16M17 2v16L6 10z" },
  { label: "上一个布局", d: "M15 2v16L5 10z" },
  { label: "下一个布局", d: "M5 2v16l10-8z" },
  { label: "最后一个布局", d: "M17 2v16M3 2v16l11-8z" },
];

function LayoutTabs() {
  return (
    <div className="flex h-[11px] shrink-0 items-stretch bg-[#fcfcfc] text-[7px] text-[#222]">
      {navGlyphs.map((glyph) => (
        <IconButton key={glyph.label} label={glyph.label} className="w-[10px] border-r border-[#ddd]">
          <Svg className="size-[6px]"><path d={glyph.d} fill="#333" stroke="#333" strokeWidth="1.500" /></Svg>
        </IconButton>
      ))}
      <button type="button" className="w-7 bg-black font-bold text-white [clip-path:polygon(0_0,100%_0,85%_100%,12%_100%)]">模型</button>
      <button type="button" className="flex items-center gap-[5px] pl-1">布局1<span>/</span></button>
      <button type="button" className="flex items-center gap-[5px] pl-[5px]">布局2<span>/</span></button>
      <div className="mr-3 ml-auto flex w-1/3 items-center justify-between bg-[#f3f3f3] px-1">
        <Svg className="size-[5px]"><path d="M15 2v16L4 10z" fill="#333" /></Svg>
        <CaretRight className="size-[5px]" />
      </div>
    </div>
  );
}

const statusToggles: { label: string; d: string; on?: boolean }[] = [
  { label: "推断约束", d: "M7 1v12M2 5h10M14 8v10M11 14l3 4 3-4" },
  { label: "捕捉", d: "M3 3v14h14" },
  { label: "栅格", d: "M2 6h12v12H2zM6 14L18 2M6 14l3-6" },
  { label: "正交", d: "M2 3h16v14H2z", on: true },
  { label: "极轴", d: "M6 2h11v11H6zM2 7v11h11" },
  { label: "对象捕捉", d: "M2 17L17 3M2 17h16", on: true },
  { label: "三维对象捕捉", d: "M2 2v16h16M5 14l4-5 4 3 5-9", on: true },
  { label: "对象追踪", d: "M2 13h16M8 6v7l5-4z", on: true },
  { label: "动态 UCS", d: "M2 11h16M10 4v14" },
  { label: "动态输入", d: "M3 3h14v14H3z", on: true },
  { label: "线宽", d: "M5 4h10v12H5z" },
  { label: "透明度", d: "M3 2v8h8M10 10h8v8h-8z" },
  { label: "快捷特性", d: "M10 1v18M1 10h18" },
];

const trayIcons: { label: string; node: ReactNode }[] = [
  { label: "快速查看布局", node: <path d="M2 3h16v14H2zM6 6l6 6" stroke="#222" strokeWidth="2" fill="#eee" /> },
  { label: "快速查看图形", node: <path d="M2 12h16v5H2zM5 3v6M10 3v9M15 3v6" stroke="#222" strokeWidth="2" fill="#eee" /> },
];

function StatusBar() {
  return (
    <footer className="flex h-3 shrink-0 items-center bg-linear-to-b from-[#b0b0b0] to-[#7c7c7c] text-[7px] text-black">
      <output className="w-[125px] shrink-0 pl-[5px] font-['Liberation_Mono',monospace] whitespace-pre">890.5194,  2871.8790, 0.0000</output>
      {statusToggles.map((toggle) => (
        <button
          key={toggle.label}
          type="button"
          aria-label={toggle.label}
          aria-pressed={Boolean(toggle.on)}
          className={
            toggle.on
              ? "flex h-full w-[11px] items-center justify-center border-r border-[#888] bg-[#b5dcec]"
              : "flex h-full w-[11px] items-center justify-center border-r border-[#888] bg-[#b4b4b4]"
          }
        >
          <Svg className="size-2"><path d={toggle.d} stroke={toggle.on ? "#1e5f8c" : "#3a3a3a"} strokeWidth="2" fill={toggle.on ? "#e6f5fb" : "none"} /></Svg>
        </button>
      ))}
      <span className="ml-[7px] font-['Liberation_Mono',monospace] text-[7px]">STRUCT</span>
      <div className="ml-auto flex items-center gap-1 pr-px">
        <button type="button" className="text-[8px] font-bold">模型</button>
        {trayIcons.map((icon) => (
          <IconButton key={icon.label} label={icon.label}><Svg className="size-[9px]">{icon.node}</Svg></IconButton>
        ))}
        <IconButton label="切换工作空间" className="ml-3"><GearIcon className="size-[9px]" /></IconButton>
        <IconButton label="锁定">
          <Svg className="size-[9px]"><path d="M2 9h11v9H2z" fill="#eee" stroke="#333" /><path d="M10 9V5c0-4 7-4 7 0v3" stroke="#eee" strokeWidth="2.500" /></Svg>
        </IconButton>
        <IconButton label="硬件加速">
          <Svg className="size-[9px]"><path d="M1 3h17v11H1z" fill="#e9e2c8" stroke="#444" /><path d="M9 9h8l-3 9z" fill="#e0a63e" /></Svg>
        </IconButton>
        <IconButton label="隔离对象">
          <Svg className="size-[10px]"><circle cx="10" cy="8" r="6" fill="#fff1b0" stroke="#9a7d24" /><path d="M7.500 14h5v4h-5z" fill="#777" /></Svg>
        </IconButton>
        <IconButton label="全屏显示"><Caret className="size-[5px]" /></IconButton>
      </div>
    </footer>
  );
}

/* ---------- floating desktop items ---------- */

const CalloutArrows = () => (
  <svg className="pointer-events-none absolute top-0 left-0 z-30 h-[212px] w-[100px]" aria-hidden="true">
    <path d="M16.500 16l12.500 5-3 3L46.500 51 21.500 28.500l-2.500 3z" fill="#e8403a" />
    <path d="M54 167l13.500 4-2.500 3.500L95 207 61.500 179l-2.500 3z" fill="#e8403a" />
  </svg>
);

const Watermark = () => (
  <div className="absolute right-[55px] bottom-[15px] z-20 flex h-[85px] w-[180px] items-center gap-[10px] bg-[#223054] pr-[14px] pl-[15px] text-[#d2d5dd]">
    <svg viewBox="0 0 36 38" className="h-[38px] w-9 shrink-0" fill="none" stroke="currentColor" aria-hidden="true">
      <path d="M9 6.500C9 2.500 12 1 15 2.500l16 10c4.500 3 4.500 8 0 11L14 34.500c-5 3-12 1-12-5V11" strokeWidth="2.400" />
      <path d="M2 11C2 6 5 4.500 9 4v23c0 3 2 4 4.500 2.500L21 25" strokeWidth="2.200" />
      <path d="M14 13.500v10l7-5z" fill="currentColor" strokeWidth="1" />
      <path d="M24 14v8.500" strokeWidth="1.600" />
    </svg>
    <div className="flex-1 font-['Liberation_Sans','Noto_Sans_CJK_SC',sans-serif]">
      <p className="flex justify-between text-[22px] leading-[26px] font-medium">
        {["溜", "溜", "自", "学"].map((char, index) => (
          <span key={index}>{char}</span>
        ))}
      </p>
      <p className="font-['Inter',sans-serif] text-[13px] leading-4 whitespace-nowrap">zixue.3D66.COM</p>
    </div>
  </div>
);

const DesktopWidgets = () => (
  <>
    <div className="absolute right-0 bottom-[58px] z-20 flex h-3 w-[55px] items-center justify-around bg-white">
      <Svg className="size-[7px]"><path d="M3 2h4v4H3z" fill="#5c88b5" /><path d="M13 12h3l-2 6" stroke="#5c88b5" strokeWidth="2" /></Svg>
      <Svg className="size-[10px]"><path d="M1 4h18v12H1z" fill="#d8eaf8" stroke="#3c83bd" strokeWidth="2" /><path d="M4 8h12M4 12h12" stroke="#3c83bd" strokeWidth="2" strokeDasharray="2 1" /></Svg>
      <PersonIcon color="#a5a5a5" className="size-2" />
      <Svg className="size-2"><path d="M6 2l4 2 4-2 6 4-3 5-2-1v9H5v-9l-2 1-3-5z" fill="#2f82c6" /></Svg>
      <Svg className="size-2"><path d="M1 16l8-8c-1-4 2-7 6-6l-3 4 3 3 4-3c0 5-3 7-7 6l-8 7z" fill="#2f6fb0" /></Svg>
    </div>
    <div className="absolute right-0 bottom-[29px] z-20 flex h-3 w-[55px] items-center bg-linear-to-b from-[#6ea9ee] to-[#2a6fd0] text-[7px] text-white">
      <span className="flex-1 text-center">1.4KB/S</span>
      <span className="flex h-full w-5 items-center justify-center bg-[#6fb0f2]">9%</span>
    </div>
  </>
);

export default function App() {
  return (
    <div
      lang="zh-CN"
      className="relative flex min-h-screen flex-col overflow-hidden bg-black font-['Open_Sans','Noto_Sans_CJK_SC',sans-serif]"
    >
      <TitleBar />
      <Ribbon />
      <Canvas />
      <LayoutTabs />
      <StatusBar />
      <AppMenu />
      <div className="pointer-events-none absolute top-0 bottom-[79px] left-0 z-20 w-[719px] border-r border-b border-[#b04642]" />
      <div className="pointer-events-none absolute top-5 bottom-[207px] left-0 z-20 w-[2px] bg-[#f3c9cc]" />
      <CalloutArrows />
      <Watermark />
      <DesktopWidgets />
    </div>
  );
}
